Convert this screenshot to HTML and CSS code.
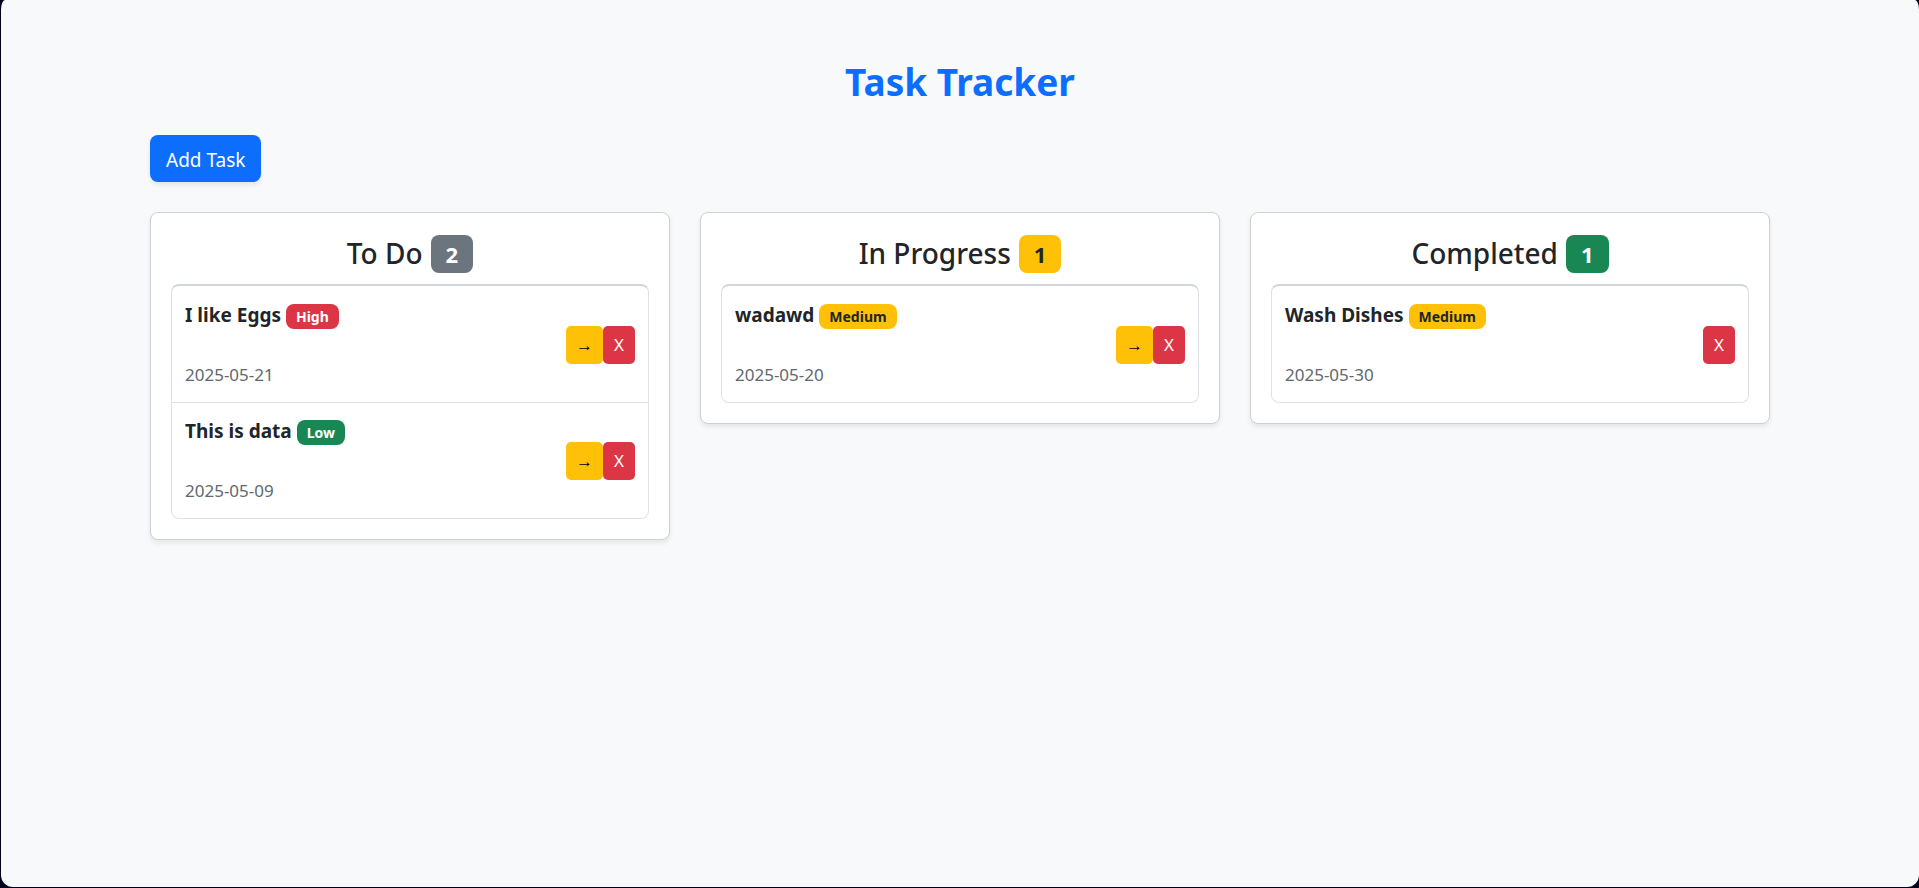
FILE: index.html
```html
<!DOCTYPE html>
<html lang="en">
<head>
<meta charset="utf-8">
<title>Task Tracker</title>
<link rel="stylesheet" href="styles.css">
</head>
<body>
<div class="page">
  <main class="container">
    <h1 class="title">Task Tracker</h1>
    <button type="button" class="btn btn-primary">Add Task</button>
    <div class="board">
      <section class="card">
        <h2 class="card-title">To Do <span class="badge secondary">2</span></h2>
        <ul class="list">
          <li class="item">
            <div class="info">
              <div class="name"><strong>I like Eggs</strong> <span class="badge danger">High</span></div>
              <small class="date">2025-05-21</small>
            </div>
            <div class="actions">
              <button type="button" class="btn btn-sm warning" aria-label="Move I like Eggs">→</button>
              <button type="button" class="btn btn-sm danger">X</button>
            </div>
          </li>
          <li class="item">
            <div class="info">
              <div class="name"><strong>This is data</strong> <span class="badge success">Low</span></div>
              <small class="date">2025-05-09</small>
            </div>
            <div class="actions">
              <button type="button" class="btn btn-sm warning" aria-label="Move This is data">→</button>
              <button type="button" class="btn btn-sm danger">X</button>
            </div>
          </li>
        </ul>
      </section>
      <section class="card">
        <h2 class="card-title">In Progress <span class="badge warning">1</span></h2>
        <ul class="list">
          <li class="item">
            <div class="info">
              <div class="name"><strong>wadawd</strong> <span class="badge warning">Medium</span></div>
              <small class="date">2025-05-20</small>
            </div>
            <div class="actions">
              <button type="button" class="btn btn-sm warning" aria-label="Move wadawd">→</button>
              <button type="button" class="btn btn-sm danger">X</button>
            </div>
          </li>
        </ul>
      </section>
      <section class="card">
        <h2 class="card-title">Completed <span class="badge success">1</span></h2>
        <ul class="list">
          <li class="item">
            <div class="info">
              <div class="name"><strong>Wash Dishes</strong> <span class="badge warning">Medium</span></div>
              <small class="date">2025-05-30</small>
            </div>
            <div class="actions">
              <button type="button" class="btn btn-sm danger">X</button>
            </div>
          </li>
        </ul>
      </section>
    </div>
  </main>
</div>
</body>
</html>
```

FILE: styles.css
```css
* { box-sizing: border-box; }

body {
  margin: 0;
  background: #02031a;
  color: #212529;
  font-family: "Noto Sans", "Open Sans", sans-serif;
  font-size: 19px;
  line-height: 30px;
}

.page {
  min-height: calc(100vh - 1px);
  margin: 0 0 1px 1px;
  padding: 58px 15px;
  background: #f8f9fb;
  border-radius: 4px 4px 12px 12px / 10px 10px 12px 12px;
}

.container {
  max-width: 1620px;
  margin: 0 auto;
}

.title {
  margin: 0 0 29px;
  color: #0d6efd;
  font-size: 37px;
  font-weight: 700;
  line-height: 48px;
  text-align: center;
}

.btn {
  border: 0;
  font-family: inherit;
  cursor: pointer;
}

.btn-primary {
  height: 47px;
  padding: 2px 16px 0;
  border-radius: 8px;
  background: #0d6efd;
  color: #fff;
  font-size: 19px;
  box-shadow: 0 3px 5px rgba(0, 0, 0, 0.08);
}

.board {
  display: grid;
  grid-template-columns: repeat(3, 1fr);
  gap: 30px;
  align-items: start;
  margin-top: 30px;
}

.card {
  padding: 20px;
  border: 1px solid #ced0d3;
  border-radius: 8px;
  background: #fff;
  box-shadow: 0 3px 5px rgba(0, 0, 0, 0.08);
}

.card-title {
  display: flex;
  justify-content: center;
  gap: 8px;
  margin: 2px 0 11px;
  font-size: 28px;
  font-weight: 500;
  line-height: 36px;
}

.badge {
  display: inline-block;
  padding: 0 10px;
  border-radius: 8px;
  font-size: 14px;
  font-weight: 700;
  line-height: 25px;
}

.card-title .badge {
  padding: 0 15px;
  font-size: 22px;
  line-height: 38px;
}

.secondary { background: #6c757d; color: #fff; }
.danger { background: #dc3545; color: #fff; }
.success { background: #198754; color: #fff; }
.warning { background: #ffc107; color: #212529; }

.list {
  margin: 0;
  padding: 0;
  list-style: none;
  border: 1px solid #dee2e6;
  border-top: 2px solid #d2d5d9;
  border-radius: 8px;
}

.item {
  display: flex;
  justify-content: space-between;
  align-items: center;
  padding: 13px 13px 12px;
}

.item + .item {
  padding-top: 12px;
  border-top: 1px solid #dee2e6;
}

.info {
  display: grid;
  gap: 29px;
}

.name {
  display: flex;
  align-items: center;
  gap: 5px;
  line-height: 32px;
}

.name .badge { margin-top: 2px; }

.date {
  color: #62686e;
  font-size: 17px;
  line-height: 30px;
}

.actions { display: flex; }

.btn-sm {
  height: 38px;
  padding: 0 11px;
  border-radius: 5px;
  font-size: 17px;
}

.btn-sm.warning {
  padding: 0 10px;
  color: #000;
}
```
